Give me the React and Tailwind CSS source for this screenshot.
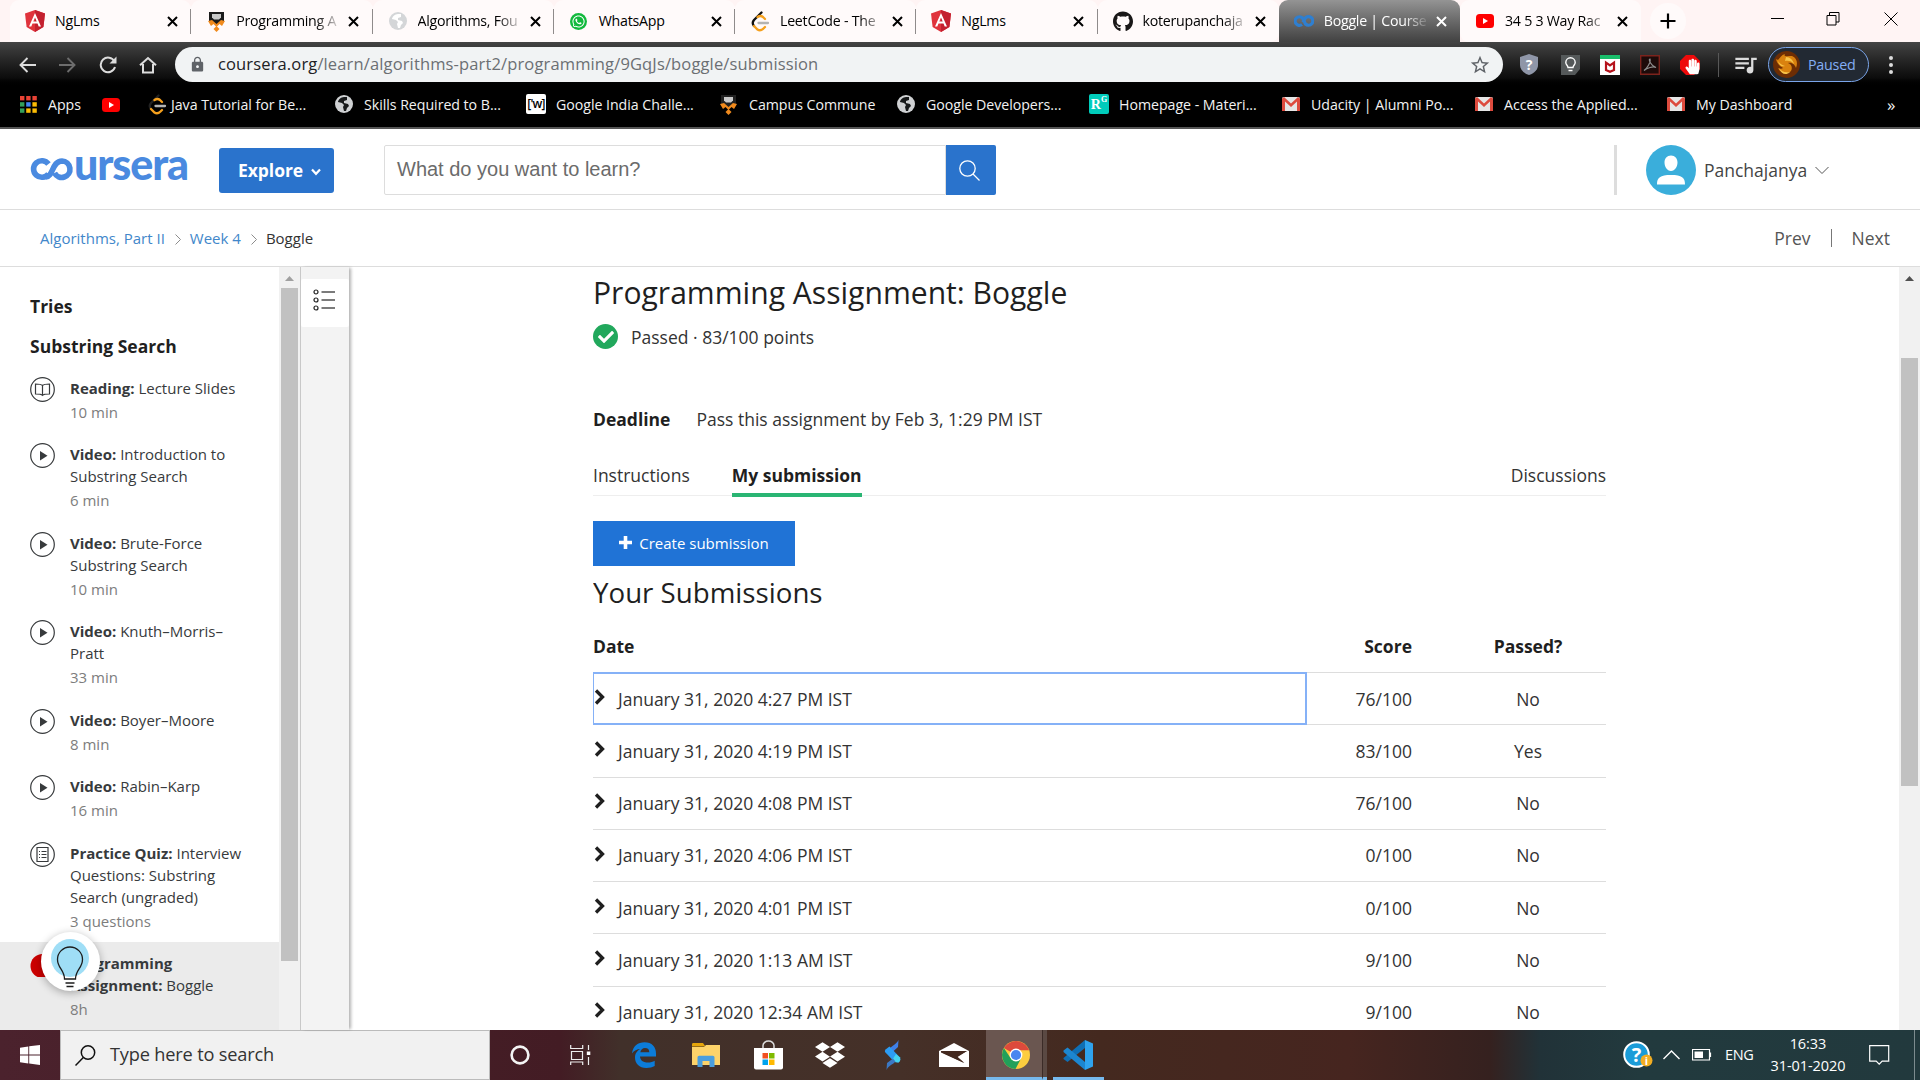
import React from "react";
import { FaWhatsapp, FaGithub, FaCheck, FaPlus, FaDropbox, FaHandPaper } from "react-icons/fa";
import { SiLeetcode } from "react-icons/si";
import { MdLock, MdStarBorder, MdQueueMusic } from "react-icons/md";

const Angular = () => (
  <svg width="20" height="22" viewBox="0 0 20 22">
    <path d="M10 0 20 3.5 18.4 17 10 22 1.6 17 0 3.5Z" fill="#e0333c" />
    <path d="M10 0 20 3.5 18.4 17 10 22Z" fill="#c3202f" />
    <path d="M10 3 4 16.5h2.3l1.2-3h5l1.2 3H16Zm0 4.5 1.7 4H8.3Z" fill="#fff" fillRule="evenodd" />
  </svg>
);
const Shield = ({ dark }) => (
  <svg width="19" height="21" viewBox="0 0 19 21">
    <path d="M2 1h15v9l-2 3H4l-2-3Z" fill={dark ? "#202020" : "#1b1b1b"} />
    <path d="M5 3h9v3.500l-2 2H7l-2-2Z" fill="#c9c9c9" />
    <path d="m1 10 4-1 4.500 4L14 9l4 1-3 5-2.500-2-3 3-3-3L4 15Z" fill="#f08a1d" />
    <path d="m9.500 15 3 3-3 3-3-3Z" fill="#f08a1d" />
  </svg>
);
const Globe = ({ c, land }) => (
  <svg width="18" height="18" viewBox="0 0 18 18">
    <circle cx="9" cy="9" r="9" fill={c} />
    <path d="M9 2c-3 0-6 3-6 5l4 1 2 2-1 2 1 4h2l1-3 2-2-1-2-4-1V6l3-1V2Z" fill={land} />
  </svg>
);
const YouTube = () => (
  <svg width="18" height="14" viewBox="0 0 18 14">
    <rect width="18" height="14" rx="3.500" fill="#f00" />
    <path d="M7 4v6l5-3Z" fill="#fff" />
  </svg>
);
const Gmail = () => (
  <svg width="18" height="14" viewBox="0 0 18 14">
    <rect width="18" height="14" rx="1.500" fill="#e6e6e6" />
    <path d="M0 14V1.500L2 0l7 6.500L16 0l2 1.500V14h-3V4.500L9 10 3 4.500V14Z" fill="#dd4b3e" />
  </svg>
);
const Infinity = () => (
  <svg width="20" height="14" viewBox="0 0 20 14" fill="none" stroke="#2f7fd0" strokeWidth="3.200">
    <path d="M8 10.500A4.300 4.300 0 1 1 8.500 4l3 6A4.300 4.300 0 1 0 11 4.500L9 8.500" />
  </svg>
);
const Apps = () => (
  <svg width="17" height="17" viewBox="0 0 17 17">
    {["#ea4335", "#ea4335", "#ea4335", "#34a05a", "#4285f4", "#fbbc05", "#34a05a", "#fbbc05", "#fbbc05"].map((f, i) => (
      <rect key={i} x={(i % 3) * 6.2} y={Math.floor(i / 3) * 6.2} width="4.400" height="4.400" fill={f} />
    ))}
  </svg>
);
const LeetCode = ({ top }) => (
  <svg width="20" height="21" viewBox="0 0 20 21" fill="none" strokeWidth="2.300" strokeLinecap="round">
    <path d="M11.500 1.500 4 9q-2.500 3 0 6" stroke={top} />
    <path d="m4 15 3.500 3.500q3 2 6-1L15 16M7.500 6q3-2 5.500 0L15 8" stroke="#f5a01d" />
    <path d="M8.500 12H18" stroke="#b3b3b3" />
  </svg>
);

const tabs = [
  [<Angular />, "NgLms"],
  [<Shield />, "Programming A"],
  [<Globe c="#d4d6d8" land="#fff" />, "Algorithms, Fou"],
  [<FaWhatsapp className="size-[17px] rounded-full bg-[#12b93d] p-[1.500px] text-white" />, "WhatsApp"],
  [<LeetCode top="#111" />, "LeetCode - The"],
  [<Angular />, "NgLms"],
  [<FaGithub className="size-[21px] text-[#191717]" />, "koterupanchaja"],
  [<Infinity />, "Boggle | Course"],
  [<YouTube />, "34 5 3 Way Rac"],
];

function TabStrip() {
  return (
    <div className="flex h-[42px] shrink-0 bg-[#fff4f4] pl-[10px]">
      {tabs.map(([icon, label], i) => (
        <div
          key={i}
          className={
            "relative flex h-full w-[181.250px] shrink-0 items-center rounded-t-[9px] pl-[15px] " +
            (i === 7 ? "bg-gradient-to-b from-[#949494] to-[#424242] text-white" : "bg-[#fffafa] text-black") +
            (i === 6 ? " rounded-br-[9px]" : "") +
            (i === 8 ? " rounded-bl-[9px]" : "")
          }
        >
          <div className="flex w-[20px] justify-center">{icon}</div>
          <div
            className={
              "ml-[10px] w-[106px] text-[14.200px] tracking-[-0.250px] whitespace-nowrap " +
              (label.length > 10 ? "[mask-image:linear-gradient(to_right,black_75%,transparent)]" : "")
            }
          >
            {label}
          </div>
          <svg className="ml-[6px]" width="11" height="11" viewBox="0 0 11 11" stroke="currentColor" strokeWidth="2">
            <path d="M1 1 10 10M10 1 1 10" />
          </svg>
          {i < 6 && <div className="absolute top-[9px] right-0 h-[25px] w-px bg-[#8f8b8b]" />}
        </div>
      ))}
      <div className="ml-[9px] flex h-[36px] w-[36px] items-center justify-center self-center rounded-full bg-[#fffafa]">
        <svg width="16" height="16" stroke="#000" strokeWidth="2.200">
          <path d="M8 0.500v15M0.500 8h15" />
        </svg>
      </div>
      <div className="ml-auto flex h-[37px] items-center pr-[22px]">
        <svg width="13" height="14" stroke="#000" fill="none">
          <path d="M0 6.500h13" />
        </svg>
        <svg className="ml-[42px]" width="15" height="14" stroke="#000" fill="none">
          <path d="M1 3.500h9v9.500h-9zM3.500 3.500v-3h9.500v9.500h-3" />
        </svg>
        <svg className="ml-[43px]" width="14" height="14" stroke="#000" fill="none">
          <path d="M0.500 0.500l13 13M13.500 0.500l-13 13" />
        </svg>
      </div>
    </div>
  );
}

function Toolbar() {
  return (
    <div className="flex h-[45px] shrink-0 items-center bg-gradient-to-b from-[#444] via-[#0c0c0c] via-80% to-black pl-[19px] text-[#dcdcdc]">
      <svg width="17" height="16" viewBox="0 0 17 16" fill="none" stroke="currentColor" strokeWidth="1.900">
        <path d="M17 8H1.500M8.500 1 1.500 8l7 7" />
      </svg>
      <svg className="ml-[23px]" width="17" height="16" viewBox="0 0 17 16" fill="none" stroke="#6d6d6d" strokeWidth="1.900">
        <path d="M0 8h15.500M8.500 1l7 7-7 7" />
      </svg>
      <svg className="ml-[23px]" width="18" height="18" viewBox="0 0 18 18" fill="none" stroke="currentColor" strokeWidth="2">
        <path d="M15.500 5.500A7.300 7.300 0 1 0 16 11" />
        <path d="M17.500 0.500v7h-7Z" fill="currentColor" stroke="none" />
      </svg>
      <svg className="ml-[22px]" width="18" height="18" viewBox="0 0 18 18" fill="none" stroke="currentColor" strokeWidth="2">
        <path d="M1 9.300 9 2l8 7.300M4 8v8.500h10V8" />
      </svg>
      <div className="ml-[18px] flex h-[35px] w-[1328px] items-center rounded-full bg-[#f1f3f4] pr-[12px] pl-[14px]">
        <MdLock className="size-[17px] text-[#5f6368]" />
        <div className="ml-[12px] text-[16.500px] tracking-[0.140px] text-[#6b6f73]">
          <span className="text-[#202124]">coursera.org</span>/learn/algorithms-part2/programming/9GqJs/boggle/submission
        </div>
        <MdStarBorder className="ml-auto size-[22px] text-[#5f6368]" />
      </div>
      <div className="ml-[16px] flex items-center">
        <svg width="20" height="21" viewBox="0 0 20 21">
          <path d="M10 0 19 3v8c0 4-3 8-9 10C4 19 1 15 1 11V3Z" fill="#8f96a8" />
          <text x="10" y="15.500" textAnchor="middle" fontSize="14" fontWeight="700" fill="#fff">?</text>
        </svg>
        <svg className="ml-[22px]" width="19" height="20" viewBox="0 0 19 20">
          <path d="M0 0h19v14l-5 6H0Z" fill="#55595a" />
          <path d="M7 12.500c0-2-2.200-2.500-2.200-5a4.700 4.700 0 0 1 9.400 0c0 2.500-2.200 3-2.200 5ZM7.500 15.500h4" fill="none" stroke="#fff" strokeWidth="1.400" />
        </svg>
        <svg className="ml-[20px]" width="20" height="20" viewBox="0 0 20 20">
          <path d="M0 0h20v20H0Z" fill="#fff" />
          <path d="M0 0h20v4H0Z" fill="#18bd6a" />
          <path d="M6 15V7.500l4 2.800 4-2.800V15l-4 1.800Z" fill="none" stroke="#b5121b" strokeWidth="2.200" />
        </svg>
        <svg className="ml-[20px]" width="20" height="20" viewBox="0 0 20 20">
          <path d="M.7.7h18.600v18.600H.7Z" fill="#1d0b0a" stroke="#7c231c" strokeWidth="1.400" />
          <path d="M4 15.500c3-2 7-8 6-11.500-2 0 1 7 6 8.500-3-1.500-9 .5-12 3Z" fill="none" stroke="#8e8e8e" strokeWidth="1.200" />
        </svg>
        <svg className="ml-[20px]" width="20" height="20" viewBox="0 0 20 20">
          <path d="M6 0h8l6 6v8l-6 6H6l-6-6V6Z" fill="#ee0a0a" />
          <FaHandPaper x="4.500" y="3.500" width="11" height="13" color="#fff" />
        </svg>
        <div className="ml-[18px] h-[24px] w-px bg-[#585858]" />
        <MdQueueMusic className="ml-[13px] size-[27px]" />
      </div>
      <div className="ml-[9px] flex h-[35px] w-[101px] items-center rounded-full border-[1.500px] border-[#7aa5ea] bg-[#222933] pl-[4px] text-[14.300px] text-[#84aef5]">
        <svg width="27" height="27" viewBox="0 0 27 27">
          <circle cx="13.500" cy="13.500" r="13.500" fill="#6d2d04" />
          <path d="M3 8c3 3 4-4 9-5-2 3 3 2 7 2 5 2 6 7 4 12-1-3-4-6-8-5 3 1 5 4 3 8-4 4-11 2-13-3 2 1 4 1 5 0C7 15 4 13 3 8Z" fill="#d9820f" />
          <path d="M13 6c4 0 7 3 8 7-2-3-6-4-9-3ZM6 17c3 4 6 5 11 4-4 4-9 2-11-4ZM5 10c2 3 4 4 7 5-4 1-6-1-7-5Z" fill="#f7c44a" />
        </svg>
        <span className="ml-[8px] tracking-[-0.250px]">Paused</span>
      </div>
      <div className="ml-[20px] flex flex-col gap-[3px]">
        <div className="size-[4px] rounded-full bg-current" />
        <div className="size-[4px] rounded-full bg-current" />
        <div className="size-[4px] rounded-full bg-current" />
      </div>
    </div>
  );
}

function Bookmarks() {
  const item = "flex shrink-0 items-center";
  return (
    <div className="flex h-[42px] shrink-0 items-center border-b-2 border-[#555] bg-black pb-[5px] pl-[20px] text-[14.200px] tracking-[-0.040px] whitespace-nowrap text-[#f2f2f2]">
      <div className={item + " w-[82px] gap-[11px]"}><Apps />Apps</div>
      <div className={item + " w-[45px]"}><YouTube /></div>
      <div className={item + " w-[188px] gap-[4px]"}><LeetCode top="#222" />Java Tutorial for Be...</div>
      <div className={item + " w-[191px] gap-[11px]"}><Globe c="#cfd1d3" land="#17191a" />Skills Required to B...</div>
      <div className={item + " w-[193px] gap-[10px]"}>
        <span className="flex size-[20px] items-center justify-center rounded-[2px] bg-white text-[12px] font-semibold tracking-[-0.800px] text-black">['w]</span>
        Google India Challe...
      </div>
      <div className={item + " w-[178px] gap-[11px]"}><Shield dark />Campus Commune</div>
      <div className={item + " w-[192px] gap-[11px]"}><Globe c="#cfd1d3" land="#17191a" />Google Developers...</div>
      <div className={item + " w-[193px] gap-[10px]"}>
        <span className="flex size-[20px] items-center justify-center rounded-[2px] bg-[#00ccbb] font-['Liberation_Serif'] text-[14px] font-bold text-white">R<sup className="text-[8px]">G</sup></span>
        Homepage - Materi...
      </div>
      <div className={item + " w-[193px] gap-[11px]"}><Gmail />Udacity | Alumni Po...</div>
      <div className={item + " w-[192px] gap-[11px]"}><Gmail />Access the Applied...</div>
      <div className={item + " w-[220px] gap-[11px]"}><Gmail />My Dashboard</div>
      <span className="text-[17px]">»</span>
    </div>
  );
}

function Header() {
  return (
    <div className="flex h-[81px] shrink-0 items-center border-b border-[#ddd] bg-white pt-[2px]">
      <div className="ml-[30px] flex h-[50px] w-[189px] items-center pb-[2px]">
        <svg className="shrink-0" width="44" height="24" viewBox="0 0 44 24" fill="none" stroke="#4a8ae0" strokeWidth="5.600">
          <path d="M18.500 17A8.300 8.300 0 1 1 18.500 7M16 20C23 20 22 4 32 4a8.200 8.200 0 1 1-7.500 12" />
        </svg>
        <span className="-mt-[12px] font-['Lato'] text-[43px] leading-none font-black tracking-[-1.100px] text-[#4a8ae0]">ursera</span>
      </div>
      <button className="flex h-[45px] w-[115px] items-center rounded-[3px] bg-[#2a73cc] pl-[19px] text-[17.500px] font-bold text-white">
        <span className="tracking-[-0.050px]">Explore</span>
        <svg className="mt-[4px] ml-[7px]" width="12" height="8" viewBox="0 0 12 8" fill="none" stroke="#fff" strokeWidth="2.200">
          <path d="M2 1.500 6 5.800l4-4.300" />
        </svg>
      </button>
      <div className="ml-[50px] flex h-[50px] w-[612px]">
        <div className="w-[562px] rounded-l-[2px] border border-[#ddd] pt-[10px] pl-[12px] font-['Liberation_Sans'] text-[20px] leading-[27px] text-[#6b6b6b]">
          What do you want to learn?
        </div>
        <div className="flex w-[50px] items-center justify-center rounded-r-[2px] bg-[#2a73cc] pr-[4px]">
          <svg width="21" height="21" viewBox="0 0 21 21" fill="none" stroke="#fff" strokeWidth="1.300">
            <circle cx="8.500" cy="8.500" r="7.700" />
            <path d="m14 14 6.500 6.500" />
          </svg>
        </div>
      </div>
      <div className="ml-[618px] h-[50px] w-[3px] bg-[#ddd]" />
      <svg className="ml-[29px]" width="50" height="50" viewBox="0 0 50 50">
        <circle cx="25" cy="25" r="25" fill="#3aaedb" />
        <path d="M25 10.500c4 0 6.500 3 6.500 7s-2.500 8.500-6.500 8.500-6.500-4.500-6.500-8.500 2.500-7 6.500-7ZM11 39.500c0-7 3-9.500 14-9.500s14 2.500 14 9.500Z" fill="#fff" />
      </svg>
      <span className="ml-[8px] text-[17.500px] text-[#444]">Panchajanya</span>
      <svg className="ml-[8px]" width="14" height="9" viewBox="0 0 14 9" fill="none" stroke="#555">
        <path d="M.5 1 7 7.500 13.500 1" />
      </svg>
    </div>
  );
}

const Crumb = () => (
  <svg className="mt-[3px]" width="6" height="11" viewBox="0 0 6 11" fill="none" stroke="#8c8c8c">
    <path d="M.5.5 5.500 5.500l-5 5" />
  </svg>
);

function Breadcrumbs() {
  return (
    <div className="flex h-[57px] shrink-0 items-center border-b border-[#ddd] bg-white px-[30px] pl-[40px] text-[15px] text-[#4287ca]">
      Algorithms, Part II
      <span className="mr-[9px] ml-[10px]"><Crumb /></span>
      Week 4
      <span className="mr-[9px] ml-[10px]"><Crumb /></span>
      <span className="text-[#333]">Boggle</span>
      <div className="ml-auto flex items-center text-[17.500px] text-[#555]">
        Prev
        <div className="mx-[20px] h-[18px] w-px bg-[#777]" />
        Next
      </div>
    </div>
  );
}

const ItemIcon = ({ kind }) => (
  <svg className="shrink-0" width="25" height="25" viewBox="0 0 25 25" fill="none" stroke="#373a3c" strokeWidth="1.200">
    {kind === "done" ? <circle cx="12.500" cy="14" r="12" fill="#c00" stroke="none" /> : <circle cx="12.500" cy="12.500" r="11.800" />}
    {kind === "play" && <path d="M10 8v9.500l7.500-4.750Z" fill="#373a3c" stroke="none" />}
    {kind === "book" && <path d="M12.500 8.500c-1-1-3-1.500-7-1.500v10c4 0 6 .3 7 1.300 1-1 3-1.300 7-1.300V7c-4 0-6 .5-7 1.500Zm0 0v10" />}
    {kind === "quiz" && <path d="M7 5.500h11v14H7ZM9 9.500h1M11.500 9.500h5M9 12.500h1M11.500 12.500h5M9 15.500h1M11.500 15.500h5" />}
  </svg>
);

const lessons = [
  ["book", "Reading:", ["Lecture Slides"], "10 min", "h-[66.200px]"],
  ["play", "Video:", ["Introduction to", "Substring Search"], "6 min", "h-[88.600px]"],
  ["play", "Video:", ["Brute-Force", "Substring Search"], "10 min", "h-[88.400px]"],
  ["play", "Video:", ["Knuth–Morris–", "Pratt"], "33 min", "h-[88.600px]"],
  ["play", "Video:", ["Boyer–Moore"], "8 min", "h-[66.400px]"],
  ["play", "Video:", ["Rabin–Karp"], "16 min", "h-[66.800px]"],
  ["quiz", "Practice Quiz:", ["Interview", "Questions: Substring", "Search (ungraded)"], "3 questions", "h-[100px]"],
];

const Lesson = ({ kind, title, lines, time, size }) => (
  <div className={"flex shrink-0 pl-[30px] text-[15px] leading-[22px] text-[#373a3c] " + size}>
    <ItemIcon kind={kind} />
    <div className="ml-[15px] whitespace-nowrap">
      <b className="font-bold">{title}</b> {lines.map((l, i) => <React.Fragment key={i}>{i > 0 && <br />}{l}</React.Fragment>)}
      <div className="mt-[2px] text-[#7d7d7d]">{time}</div>
    </div>
  </div>
);

function Sidebar() {
  return (
    <div className="relative flex h-full w-[350px] shrink-0">
      <div className="flex h-full w-[279px] flex-col overflow-hidden bg-white pt-[27px]">
        <h3 className="h-[40px] shrink-0 pl-[30px] text-[17.500px] leading-[24px] font-bold text-[#1f1f1f]">Tries</h3>
        <h3 className="h-[43px] shrink-0 pl-[30px] text-[17.500px] leading-[24px] font-bold text-[#1f1f1f]">Substring Search</h3>
        {lessons.map(([kind, title, lines, time, size], i) => (
          <Lesson key={i} kind={kind} title={title} lines={lines} time={time} size={size} />
        ))}
        <div className="flex-1 bg-[#ebebeb] pt-[10px]">
          <Lesson kind="done" title={<>Programming<br />Assignment:</>} lines={["Boggle"]} time="8h" size="h-[80px]" />
        </div>
      </div>
      <div className="flex h-full w-[21px] flex-col items-center bg-[#f1f1f1]">
        <svg className="mt-[9px]" width="9" height="5"><path d="M0 5h9L4.500 0Z" fill="#a0a0a0" /></svg>
        <div className="mt-[7px] h-[673px] w-[17px] bg-[#c1c1c1]" />
      </div>
      <div className="h-full w-[49px] border-l border-[#c8c8c8] bg-[#f3f3f3] pt-[12px] shadow-[3px_0_3px_-1px_rgba(0,0,0,0.3)]">
        <div className="flex h-[48px] w-[48px] items-center justify-center rounded-[2px] bg-white pr-[3px] pb-[6px]">
          <svg width="22" height="22" viewBox="0 0 22 22" fill="none" stroke="#222" strokeWidth="1.200">
            {[3, 11, 19].map((y) => (
              <g key={y}><circle cx="3" cy={y} r="2" /><path d={`M8.500 ${y}H22`} /></g>
            ))}
          </svg>
        </div>
      </div>
      <div className="absolute top-[665px] left-[41px] flex size-[59px] items-center justify-center rounded-full bg-white pr-[1px] shadow-[0_2px_8px_rgba(0,0,0,0.3)]">
        <svg width="40" height="52" viewBox="0 0 40 52" fill="none" stroke="#1c1c1c" strokeWidth="1.300">
          <circle cx="20" cy="22" r="19" fill="#9fdef6" stroke="none" />
          <path d="M14.500 43c0-9-7-11-7-19.500a12.500 12.500 0 0 1 25 0c0 8.500-7 10.500-7 19.500Z" />
          <path d="M15.500 47h9M16.500 50.500h7" />
        </svg>
      </div>
    </div>
  );
}

const rows = [
  ["January 31, 2020 4:27 PM IST", "76/100", "No"],
  ["January 31, 2020 4:19 PM IST", "83/100", "Yes"],
  ["January 31, 2020 4:08 PM IST", "76/100", "No"],
  ["January 31, 2020 4:06 PM IST", "0/100", "No"],
  ["January 31, 2020 4:01 PM IST", "0/100", "No"],
  ["January 31, 2020 1:13 AM IST", "9/100", "No"],
  ["January 31, 2020 12:34 AM IST", "9/100", "No"],
];

function Main() {
  return (
    <div className="flex h-full w-[1013px] shrink-0 flex-col overflow-hidden text-[17.500px] text-[#333]">
      <h1 className="mt-[4px] h-[44px] shrink-0 text-[30.100px] leading-[44px] text-[#1f1f1f]">Programming Assignment: Boggle</h1>
      <div className="mt-[9px] flex h-[27px] shrink-0 items-center">
        <div className="-mt-[2px] flex size-[25px] items-center justify-center rounded-full bg-[#21a85c]">
          <FaCheck className="size-[16px] text-white" />
        </div>
        <span className="ml-[13px]">Passed · 83/100 points</span>
      </div>
      <div className="mt-[55px] flex h-[26px] shrink-0 items-center">
        <b className="text-[#1f1f1f]">Deadline</b>
        <span className="ml-[26px]">Pass this assignment by Feb 3, 1:29 PM IST</span>
      </div>
      <div className="mt-[26px] flex h-[38px] shrink-0 border-b border-[#eee] leading-[34px]">
        <span>Instructions</span>
        <span className="ml-[42px] h-[39px] shrink-0 border-b-4 border-[#2ab573] font-bold text-[#1f1f1f]">My submission</span>
        <span className="ml-auto">Discussions</span>
      </div>
      <button className="mt-[25px] flex h-[45px] w-[202px] shrink-0 items-center justify-center bg-[#2073d6] text-[15px] font-medium text-white">
        <svg className="mt-[-3px] mr-[7px]" width="13" height="13" stroke="#fff" strokeWidth="3.600">
          <path d="M6.500 0v13M0 6.500h13" />
        </svg>
        Create submission
      </button>
      <h2 className="mt-[6px] h-[40px] shrink-0 text-[27.700px] leading-[40px] text-[#1f1f1f]">Your Submissions</h2>
      <div className="mt-[15px] grid h-[46px] shrink-0 grid-cols-[713px_106px_1fr] items-center border-b border-[#ddd] pb-[7px] font-bold text-[#1f1f1f]">
        <span>Date</span>
        <span className="text-right">Score</span>
        <span className="pl-[38px] text-center">Passed?</span>
      </div>
      {rows.map(([date, score, passed], i) => (
        <div key={i} className="grid h-[52.300px] shrink-0 grid-cols-[713px_106px_1fr] items-center border-b border-[#ddd]">
          <div className={"flex h-full items-center" + (i === 0 ? " outline-2 -outline-offset-1 outline-[#85b1f7]" : "")}>
            <svg className="-mt-[4px] ml-[1px]" width="11" height="16" viewBox="0 0 11 16" fill="none" stroke="#1f1f1f" strokeWidth="3.300">
              <path d="m2 1.500 6.500 6.500-6.500 6.500" />
            </svg>
            <span className="ml-[13px]">{date}</span>
          </div>
          <span className="text-right">{score}</span>
          <span className="pl-[38px] text-center">{passed}</span>
        </div>
      ))}
    </div>
  );
}

function Taskbar() {
  const cell = "flex h-full w-[62px] shrink-0 items-center justify-center";
  return (
    <div className="flex h-[50px] shrink-0 items-center bg-[linear-gradient(to_right,#4b222d_0px,#431c24_560px,#41302a_620px,#453028_900px,#44291f_1100px,#46251f_1350px,#35211f_1490px,#213238_1540px,#223a3e_1640px,#22393d_1920px)] text-white">
      <div className="flex h-full w-[60px] items-center justify-center">
        <svg width="20" height="20" viewBox="0 0 20 20" fill="#fff">
          <path d="M0 2.700 8.300 1.500v8H0ZM9.200 1.300 20 0v9.500H9.200ZM0 10.400h8.300v8L0 17.300ZM9.200 10.400H20V20L9.200 18.600Z" />
        </svg>
      </div>
      <div className="mr-[-1px] flex h-full w-[430px] items-center border border-[#bbb] bg-[#f1f1f1] pl-[14px] text-[18.200px] text-[#333]">
        <svg width="21" height="21" viewBox="0 0 21 21" fill="none" stroke="#111" strokeWidth="1.500">
          <circle cx="13" cy="7.500" r="6.700" />
          <path d="M8.300 12.500.5 20.500" />
        </svg>
        <span className="ml-[14px] tracking-[-0.180px]">Type here to search</span>
      </div>
      <div className={cell}>
        <svg width="20" height="20"><circle cx="10" cy="10" r="8.400" fill="none" stroke="#f4f4f4" strokeWidth="2.600" /></svg>
      </div>
      <div className={cell + " pr-[3px]"}>
        <svg width="21" height="20" fill="none" stroke="#eee" strokeWidth="1.200">
          <path d="M.7 0v3.500h12V0M1.500 6.500h11v8h-11zM.7 20v-3h12v3M18.500 0v5M18.500 12v8" />
          <path d="M16.800 6.500h3.500v3.500h-3.500z" fill="#fff" stroke="none" />
        </svg>
      </div>
      <div className={cell}>
        <svg width="26" height="26" viewBox="0 0 26 26" fill="#0c7cd9">
          <path d="M1 11.500C2 4 7 .3 13.500.3 21 .3 25 5 25 11.500v3H9c.3 4.500 4 6 8 6 2.500 0 5-.8 6.700-1.800v5.200c-2.200 1.300-5 2-8.200 2C8.500 26 4 22 4 15.500 4 11 6.500 8.500 9.500 7 6 7 3 8.500 1 11.500Zm8.300-1.300h9C18.300 7.500 17 6 14 6c-2.500 0-4.200 1.700-4.700 4.200Z" fillRule="evenodd" />
        </svg>
      </div>
      <div className={cell}>
        <svg width="28" height="24" viewBox="0 0 28 24">
          <path d="M0 1.500C0 .7.500 0 1.300 0H11l2.500 3.500H0Z" fill="#e5a50b" />
          <path d="M0 4h12l2-2h14v20H0Z" fill="#fdd36a" />
          <path d="M5.500 24V14.500c0-1 .7-1.700 1.700-1.700h13.600c1 0 1.700.7 1.700 1.700V24h-5v-6h-7v6Z" fill="#4a9ede" />
        </svg>
      </div>
      <div className={cell}>
        <svg width="29" height="30" viewBox="0 0 29 30">
          <path d="M9 8V5.500a5.500 4.500 0 0 1 11 0V8" fill="none" stroke="#ddd" strokeWidth="1.500" />
          <path d="M0 8h29v19.500q0 2-2 2H2q-2 0-2-2Z" fill="#fff" />
          <path d="M8.500 13h5.500v5.500H8.500Z" fill="#f25022" /><path d="M15 13h5.500v5.500H15Z" fill="#7fba00" />
          <path d="M8.500 19.500h5.500V25H8.500Z" fill="#00a4ef" /><path d="M15 19.500h5.500V25H15Z" fill="#ffb900" />
        </svg>
      </div>
      <div className={cell}><FaDropbox className="size-[30px]" /></div>
      <div className={cell}>
        <svg width="17" height="30" viewBox="0 0 17 30">
          <path d="M14.500 0 14 7 8 12.500 5 9.500C7 6 12 5 14.500 0Z" fill="#3f7fe8" />
          <path d="m1.500 9.500 4-3L16 17.500q1 3-1.500 5l-4-.5L1 12q-.5-1.500.5-2.500Z" fill="#2c9cf3" />
          <path d="M16 17.500q1 3-1.500 5l-4-.5-2-2.500L12 14Z" fill="#45d3ee" />
          <path d="M2.500 30 3 23l6-4.500 2.500 3C9 24.500 5 25 2.500 30Z" fill="#3b78c4" />
        </svg>
      </div>
      <div className={cell}>
        <svg width="30" height="24" viewBox="0 0 30 24">
          <path d="M0 8 15 0l15 8v16H0Z" fill="#fff" />
          <path d="M2 8h26l-9.500 6L25 20 2 9.500Z" fill="#44291f" />
          <path d="m28 8-10 5.500 7.500 6.500L2 9l11 2Z" fill="#44291f" />
        </svg>
      </div>
      <div className="ml-[1px] flex h-full w-[56px] shrink-0 items-center justify-center border-b-[3px] border-[#76b9ed] bg-[#6a5650] pt-[3px] pl-[3px]">
        <svg width="28" height="28" viewBox="0 0 28 28">
          <circle cx="14" cy="14" r="14" fill="#fccd3f" />
          <path d="M14 14 1.900 7a14 14 0 0 1 24.200 0l1 2.200H14Z" fill="#dc4a3c" />
          <path d="M1.900 7A14 14 0 0 0 13.500 28l5.500-10.500L8.500 17Z" fill="#21a05a" />
          <circle cx="14" cy="14" r="6.400" fill="#fff" />
          <circle cx="14" cy="14" r="5.100" fill="#4a86f0" />
        </svg>
      </div>
      <div className="h-full w-[5px] border-b-[3px] border-l border-[#76b9ed] border-l-[#3b2b27] bg-[#5a4943]" />
      <div className="ml-[6px] flex h-full w-[51px] shrink-0 items-center justify-center border-b-[3px] border-[#76b9ed] pt-[3px] pr-[1px]">
        <svg width="30" height="30" viewBox="0 0 30 30">
          <path d="M22 0v8L4.500 22l-4-3V18Z" fill="#0f6fb5" />
          <path d="m.5 10.500 4-3L22 22v8L.5 12Z" fill="#1c86d0" />
          <path d="m22 0 8 3.500v23L22 30Z" fill="#2fa3ee" />
        </svg>
      </div>
      <div className="ml-auto flex items-center text-[14.500px]">
        <svg width="30" height="28" viewBox="0 0 30 28">
          <circle cx="13.500" cy="13.500" r="12.300" fill="#1a9cd8" stroke="#fff" strokeWidth="2" />
          <text x="13.500" y="20.500" textAnchor="middle" fontSize="20" fontWeight="700" fill="#fff">?</text>
          <circle cx="23.500" cy="19.500" r="6" fill="#f2ad22" />
          <text x="23.500" y="24" textAnchor="middle" fontSize="11" fontWeight="700" fill="#fff">i</text>
        </svg>
        <svg className="ml-[10px]" width="17" height="10" fill="none" stroke="#fff" strokeWidth="1.400"><path d="M.5 9 8.500 1l8 8" /></svg>
        <svg className="ml-[12px]" width="20" height="12" fill="none" stroke="#fff">
          <path d="M.5.5h17v10.500H.5ZM18.500 3.500v4.500" strokeWidth="1.200" />
          <path d="M2.500 2.500h8.500v6.500H2.500Z" fill="#fff" stroke="none" />
        </svg>
        <span className="ml-[13px] w-[31px] tracking-[-0.400px]">ENG</span>
        <div className="ml-[12px] w-[80px] text-center leading-[22.500px] tracking-[-0.050px] whitespace-nowrap">
          <div>16:33</div>
          <div>31-01-2020</div>
        </div>
        <svg className="ml-[21px]" width="21" height="20" fill="none" stroke="#fff" strokeWidth="1.200">
          <path d="M.7.7h19v15.500h-6.500l-3 3-3-3H.7Z" />
        </svg>
        <div className="mr-[5px] ml-[24px] h-[50px] w-px bg-[#7c8b8e]" />
      </div>
    </div>
  );
}

export default function App() {
  return (
    <div className="flex h-[1080px] w-[1920px] flex-col overflow-hidden bg-white font-['Open_Sans',sans-serif]">
      <TabStrip />
      <Toolbar />
      <Bookmarks />
      <Header />
      <Breadcrumbs />
      <div className="flex min-h-0 flex-1 justify-between">
        <Sidebar />
        <div className="ml-[243px] flex h-full flex-1"><Main /></div>
        <div className="flex h-full w-[21px] shrink-0 flex-col items-center bg-[#f1f1f1]">
          <svg className="mt-[9px]" width="9" height="5"><path d="M0 5h9L4.500 0Z" fill="#505050" /></svg>
          <div className="mt-[77px] h-[428px] w-[17px] bg-[#c1c1c1]" />
        </div>
      </div>
      <Taskbar />
    </div>
  );
}
